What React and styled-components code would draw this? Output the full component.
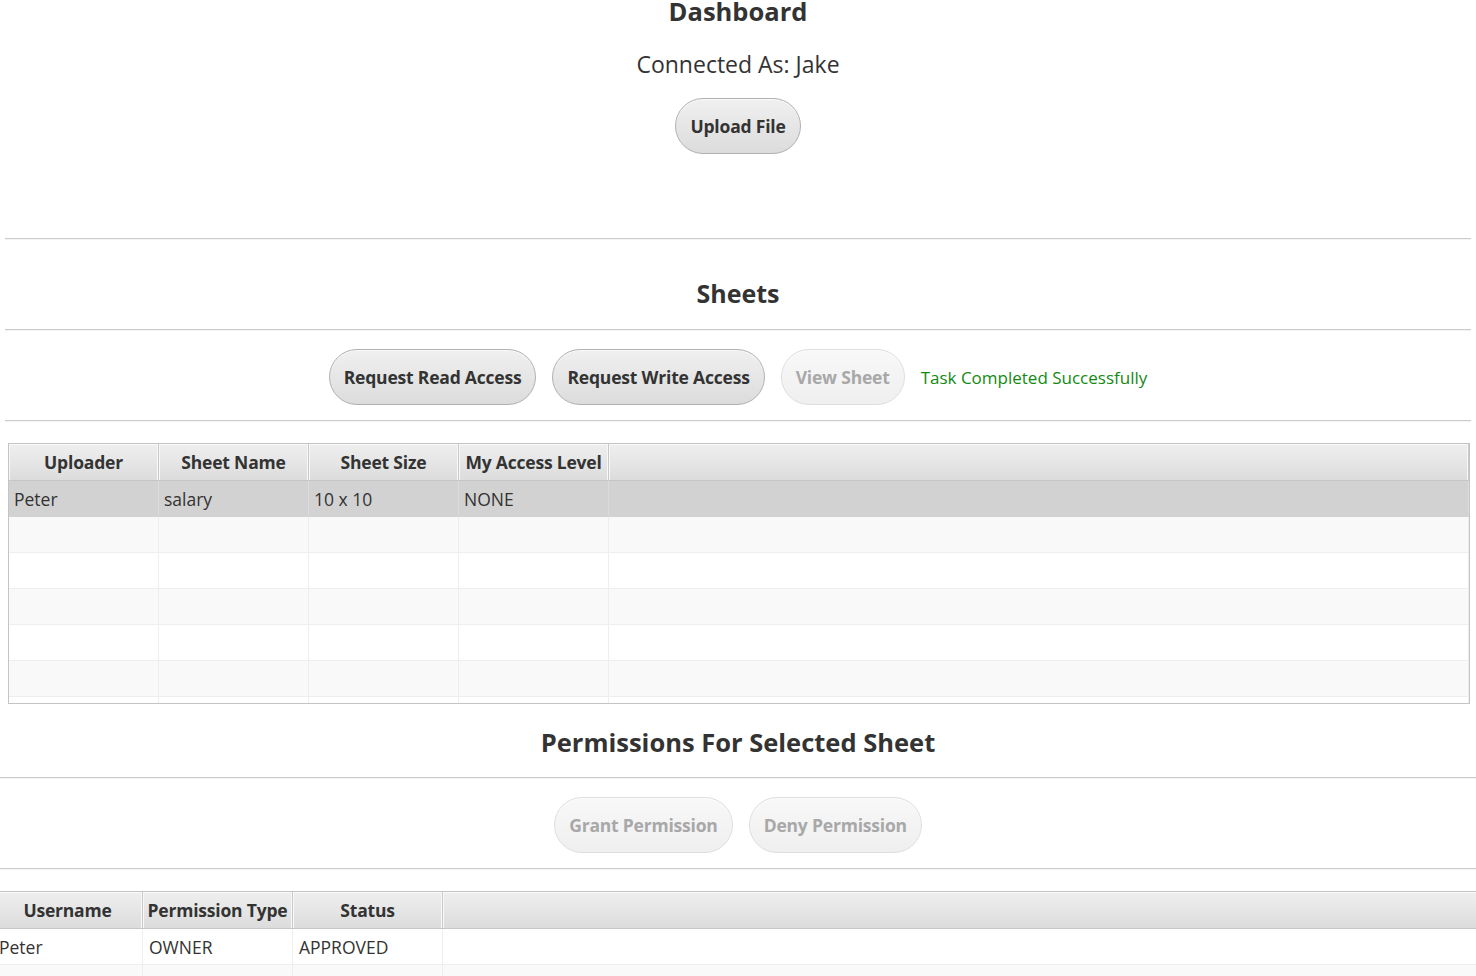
import React from "react";
import styled, { createGlobalStyle } from "styled-components";

const Global = createGlobalStyle`
  html, body { margin: 0; padding: 0; background: #ffffff; overflow: hidden; }
  body { font-family: "Open Sans", "Noto Sans", sans-serif; color: #333333; }
  * { box-sizing: border-box; }
`;

const Page = styled.div`
  width: 1476px;
  display: flex;
  flex-direction: column;
  background: #ffffff;
  & > * { flex-shrink: 0; }
`;

const TopBlock = styled.div`
  display: flex;
  flex-direction: column;
  align-items: center;
  padding-bottom: 84px;
`;

const Title = styled.h1`
  margin: ${(p) => p.$margin || "0"};
  font-size: ${(p) => p.$size || 26}px;
  line-height: 34px;
  font-weight: 700;
  color: #333333;
  text-align: center;
`;

const Connected = styled.div`
  margin-top: 21px;
  font-size: 23px;
  line-height: 30px;
  color: #333333;
`;

const PillButton = styled.button`
  height: 56px;
  margin-top: ${(p) => p.$top || 0}px;
  padding: 0 14px;
  border-radius: 28px;
  font-family: inherit;
  font-size: 17.5px;
  font-weight: 700;
  letter-spacing: -0.2px;
  cursor: default;
  color: ${(p) => (p.disabled ? "#a8a8a8" : "#333333")};
  background: ${(p) =>
    p.disabled
      ? "linear-gradient(#f8f8f8, #efefef)"
      : "linear-gradient(#f0f0f0, #dcdcdc)"};
  border: 1px solid ${(p) => (p.disabled ? "#dedede" : "#b0b0b0")};
  box-shadow: inset 0 1px 0 rgba(255, 255, 255, 0.7);
`;

const Separator = styled.div`
  height: 2px;
  margin: ${(p) => (p.$inset ? "0 5px" : "0")};
  border-top: 1px solid #cbcbcb;
  border-bottom: 1px solid #f4f4f4;
`;

const ButtonRow = styled.div`
  display: flex;
  justify-content: center;
  align-items: center;
  gap: 16px;
  padding: 18px 0 15px;
`;

const Status = styled.span`
  font-size: 17px;
  color: #128a12;
`;

const TableBox = styled.div`
  margin: ${(p) => p.$margin};
  width: ${(p) => p.$width}px;
  height: ${(p) => p.$height}px;
  border: 1px solid #c4c4c4;
  background: #ffffff;
  overflow: hidden;
  display: flex;
  flex-direction: column;
`;

const HeaderRow = styled.div`
  display: flex;
  height: 37px;
  flex-shrink: 0;
  background: linear-gradient(#efefef, #dcdcdc);
  border-bottom: 1px solid #c6c6c6;
`;

const HeaderCell = styled.div`
  width: ${(p) => (p.$w ? `${p.$w}px` : "auto")};
  flex: ${(p) => (p.$w ? "0 0 auto" : "1 1 auto")};
  display: flex;
  align-items: center;
  justify-content: center;
  font-size: 17.5px;
  font-weight: 700;
  letter-spacing: -0.2px;
  color: #333333;
  border-right: 1px solid #c9c9c9;
  box-shadow: inset 1px 1px 0 #f8f8f8, inset -1px 0 0 #f8f8f8;
  white-space: nowrap;
`;

const Row = styled.div`
  display: flex;
  height: 36px;
  flex-shrink: 0;
  background: ${(p) => (p.$selected ? "#d2d2d2" : p.$odd ? "#f9f9f9" : "#ffffff")};
  border-bottom: 1px solid ${(p) => (p.$selected ? "#d2d2d2" : "#eeeeee")};
`;

const Cell = styled.div`
  width: ${(p) => (p.$w ? `${p.$w}px` : "auto")};
  flex: ${(p) => (p.$w ? "0 0 auto" : "1 1 auto")};
  display: flex;
  align-items: center;
  padding-left: ${(p) => p.$pad}px;
  font-size: 17.5px;
  color: #333333;
  border-right: 1px solid ${(p) => (p.$selected ? "#dcdcdc" : "#eeeeee")};
  white-space: nowrap;
`;

function Table({ columns, rows, totalRows, selected, margin, width, height, pad }) {
  const list = Array.from({ length: totalRows }, (_, i) => rows[i] || null);
  return (
    <TableBox $margin={margin} $width={width} $height={height}>
      <HeaderRow>
        {columns.map((c) => (
          <HeaderCell key={c.label} $w={c.w}>
            {c.label}
          </HeaderCell>
        ))}
        <HeaderCell />
      </HeaderRow>
      {list.map((r, i) => (
        <Row key={i} $odd={i % 2 === 1} $selected={selected === i}>
          {columns.map((c, j) => (
            <Cell key={c.label} $w={c.w} $pad={pad} $selected={selected === i}>
              {r ? r[j] : ""}
            </Cell>
          ))}
          <Cell $pad={pad} $selected={selected === i} />
        </Row>
      ))}
    </TableBox>
  );
}

const sheetColumns = [
  { label: "Uploader", w: 150 },
  { label: "Sheet Name", w: 150 },
  { label: "Sheet Size", w: 150 },
  { label: "My Access Level", w: 150 },
];

const permColumns = [
  { label: "Username", w: 150 },
  { label: "Permission Type", w: 150 },
  { label: "Status", w: 150 },
];

export default function App() {
  return (
    <Page>
      <Global />
      <TopBlock>
        <Title $margin="-6px 0 0" $size={25.5}>Dashboard</Title>
        <Connected>Connected As: Jake</Connected>
        <PillButton $top={19}>Upload File</PillButton>
      </TopBlock>
      <Separator $inset />
      <Title $margin="36px 0 19px" $size={25}>Sheets</Title>
      <Separator $inset />
      <ButtonRow>
        <PillButton>Request Read Access</PillButton>
        <PillButton>Request Write Access</PillButton>
        <PillButton disabled>View Sheet</PillButton>
        <Status>Task Completed Successfully</Status>
      </ButtonRow>
      <Separator $inset />
      <Table
        columns={sheetColumns}
        rows={[["Peter", "salary", "10 x 10", "NONE"]]}
        totalRows={7}
        selected={0}
        margin="21px 0 0 8px"
        width={1462}
        height={261}
        pad={5}
      />
      <Title $margin="21px 0 18px" $size={25.5}>Permissions For Selected Sheet</Title>
      <Separator />
      <ButtonRow>
        <PillButton disabled>Grant Permission</PillButton>
        <PillButton disabled>Deny Permission</PillButton>
      </ButtonRow>
      <Separator />
      <Table
        columns={permColumns}
        rows={[["Peter", "OWNER", "APPROVED"]]}
        totalRows={3}
        selected={-1}
        margin="21px 0 0 -8px"
        width={1500}
        height={120}
        pad={6}
      />
    </Page>
  );
}
